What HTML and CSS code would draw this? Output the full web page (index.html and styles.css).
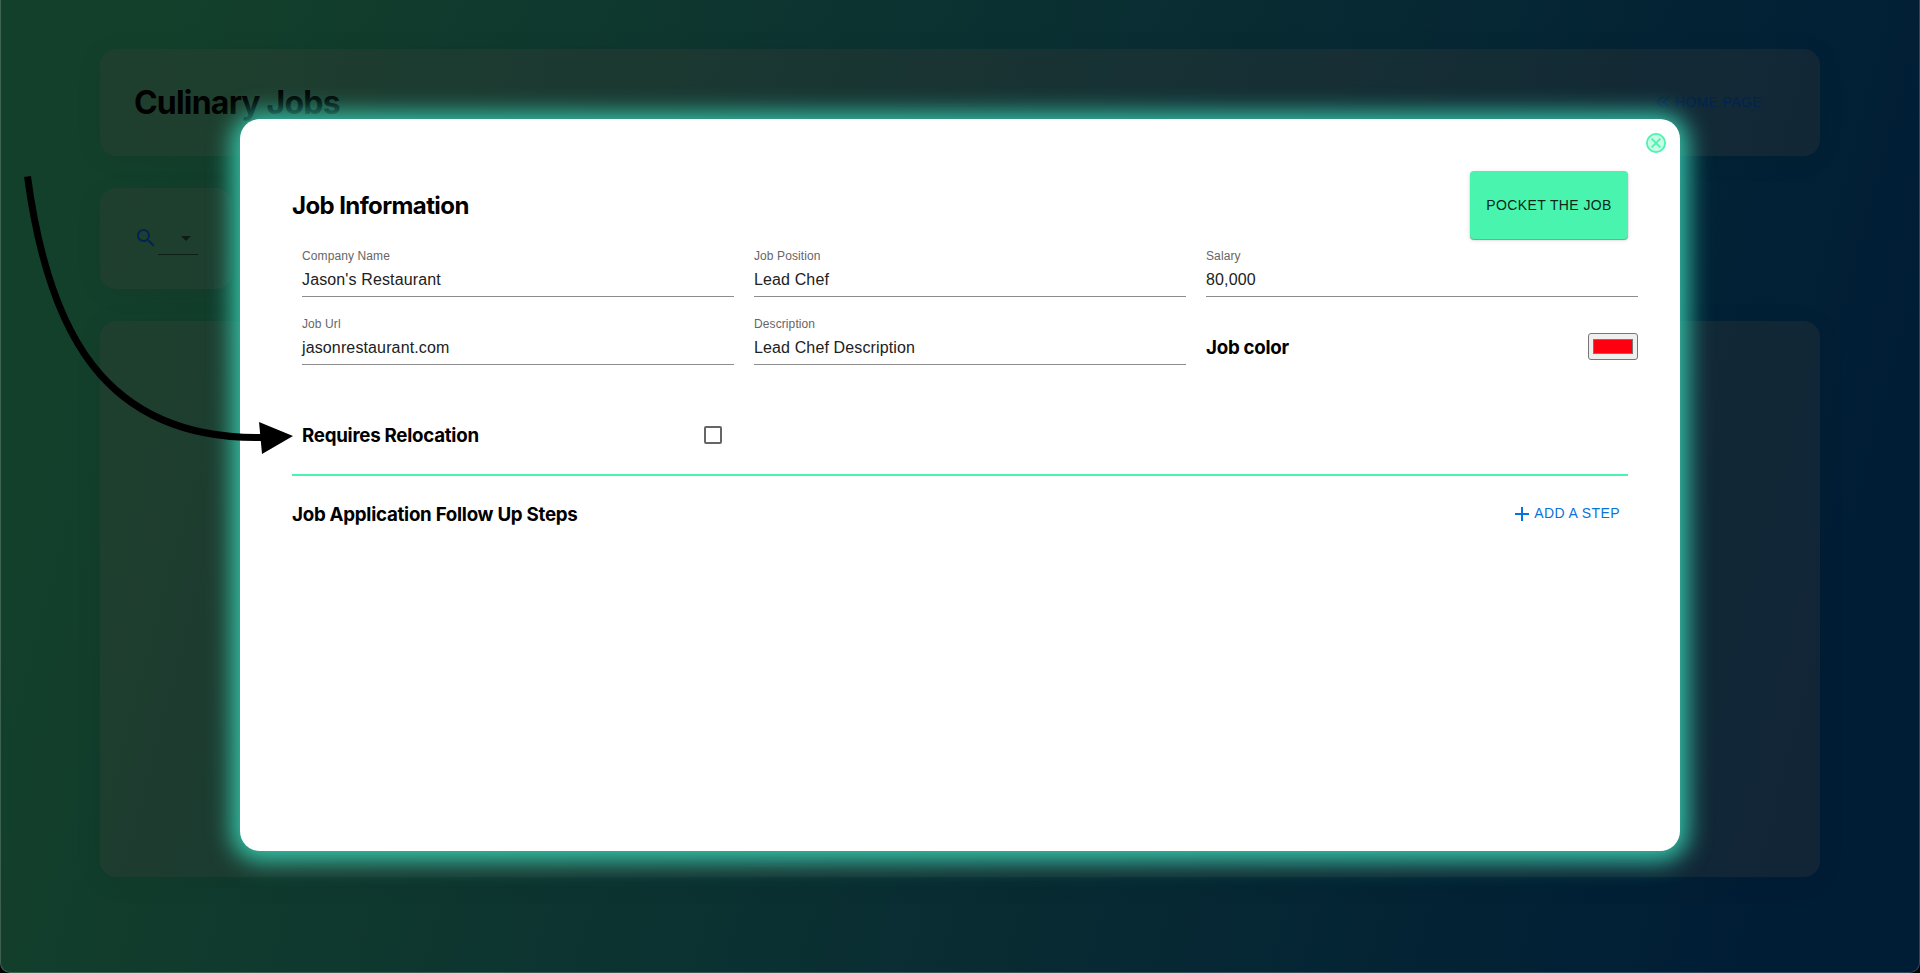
FILE: index.html
```html
<!DOCTYPE html>
<html lang="en">
<head>
<meta charset="utf-8">
<title>Culinary Jobs</title>
<link rel="stylesheet" href="styles.css">
</head>
<body>
<div class="window">
  <main class="page">
    <header class="card header">
      <h1 class="page-title">Culinary Jobs</h1>
      <a class="home-link">
        <svg class="home-icon" viewBox="0 0 14 12"><path d="M6.500 .8 1.200 6l5.300 5.200M12.800 .8 7.500 6l5.300 5.200" fill="none" stroke="currentColor" stroke-width="1.6"/></svg>
        <span class="home-text">HOME PAGE</span>
      </a>
    </header>
    <section class="card search">
      <svg class="search-icon" viewBox="0 0 24 24"><path fill="currentColor" d="M15.500 14h-.79l-.28-.27C15.410 12.590 16 11.110 16 9.500 16 5.910 13.090 3 9.500 3S3 5.910 3 9.500 5.910 16 9.500 16c1.610 0 3.090-.59 4.230-1.570l.27.28v.79l5 4.990L20.490 19l-4.990-5zm-6 0C7.010 14 5 11.990 5 9.500S7.010 5 9.500 5 14 7.010 14 9.500 11.990 14 9.500 14z"/></svg>
      <div class="select"><svg class="caret" viewBox="0 0 10 5"><path d="M0 0h10L5 5z"/></svg></div>
    </section>
    <section class="card board"></section>
  </main>

  <div class="modal">
    <svg class="close" viewBox="0 0 20 20"><circle cx="10" cy="10" r="9.100" fill="#c8fce4" stroke="#48f4ae" stroke-width="1.800"/><path d="M5.600 5.600l8.800 8.800M14.400 5.600l-8.800 8.800" stroke="#48f4ae" stroke-width="1.800"/></svg>
    <div class="modal-head">
      <h2 class="modal-title">Job Information</h2>
      <button class="pocket"><span class="pocket-text">POCKET THE JOB</span></button>
    </div>
    <div class="fields">
      <div class="field"><label class="label">Company Name</label><div class="value">Jason's Restaurant</div></div>
      <div class="field"><label class="label">Job Position</label><div class="value">Lead Chef</div></div>
      <div class="field"><label class="label">Salary</label><div class="value">80,000</div></div>
      <div class="field"><label class="label">Job Url</label><div class="value">jasonrestaurant.com</div></div>
      <div class="field"><label class="label">Description</label><div class="value">Lead Chef Description</div></div>
      <div class="option color"><h3 class="option-title">Job color</h3><div class="swatch"><div class="swatch-fill"></div></div></div>
      <div class="option relocation"><h3 class="option-title">Requires Relocation</h3><span class="checkbox"></span></div>
    </div>
    <div class="steps">
      <h3 class="option-title">Job Application Follow Up Steps</h3>
      <a class="add-step">
        <svg class="plus" viewBox="0 0 14 14"><path d="M7 0v14M0 7h14" stroke="currentColor" stroke-width="2"/></svg>
        <span class="add-text">ADD A STEP</span>
      </a>
    </div>
  </div>

  <svg class="arrow" viewBox="0 0 300 300"><path d="M27.500 26.500C48 180 103 290 262 287.500" fill="none" stroke="#000" stroke-width="7"/><path d="M259 272l34 14-31 18z"/></svg>
</div>
</body>
</html>
```

FILE: styles.css
```css
* { box-sizing: border-box; }
html { height: 100%; background: #000; }
body { margin: 0; height: 100%; overflow: hidden; font-family: "Liberation Sans", Arial, sans-serif; color: #000; }
h1, h2, h3 { margin: 0; font-family: Inter, sans-serif; font-weight: 700; white-space: nowrap; }

.window {
  position: relative;
  height: 973px;
  padding: 49px 99px 0;
  border: 1px solid rgba(255, 255, 255, .18);
  border-top: 0;
  border-radius: 0 0 10px 10px;
  background: linear-gradient(105deg, #13402b 8%, #0c3231 42%, #001d36 92%) border-box;
  overflow: hidden;
}
.page { display: flex; flex-direction: column; gap: 32px; }
.card { background: rgba(64, 60, 58, .26); border-radius: 16px; box-shadow: 0 4px 30px rgba(0, 0, 0, .06); }
.header { height: 107px; display: flex; align-items: center; justify-content: space-between; padding: 0 58px 0 34px; }
.page-title { font-size: 32px; line-height: 40px; letter-spacing: -.8px; }
.home-link { display: flex; align-items: center; gap: 5px; margin-top: -2px; color: #002450; font-size: 14px; letter-spacing: .4px; }
.home-icon { width: 14px; height: 12px; }
.search { width: 132px; height: 101px; display: flex; align-items: center; padding-left: 34px; color: #002552; }
.search-icon { width: 24px; height: 24px; margin-top: -2px; }
.select { display: flex; justify-content: flex-end; align-items: center; width: 40px; height: 32px; padding-right: 7px; border-bottom: 1px solid #0d2018; }
.caret { width: 10px; height: 5px; fill: #0d1c16; }
.board { height: 556px; }

.modal {
  position: absolute;
  left: 239px;
  top: 119px;
  width: 1440px;
  height: 732px;
  padding: 52px;
  border-radius: 20px;
  background: #fff;
  box-shadow: 0 2px 23px 8px #36c6aa;
}
.close { position: absolute; right: 14px; top: 14px; width: 20px; height: 20px; }
.modal-head { display: flex; justify-content: space-between; align-items: center; height: 68px; }
.modal-title { font-size: 24px; letter-spacing: -.6px; }
.pocket { width: 158px; height: 68px; padding: 0; border: 0; border-radius: 4px; background: #48f4ae; font: 14px "Liberation Sans", Arial, sans-serif; letter-spacing: .4px; color: rgba(0, 0, 0, .87); box-shadow: 0 1px 1px rgba(0, 0, 0, .4), 0 1px 5px rgba(0, 0, 0, .12); white-space: nowrap; }
.fields { display: grid; grid-template-columns: repeat(3, 432px); grid-template-rows: 58px 58px 78px; gap: 10px 20px; margin-left: 10px; margin-right: -10px; }
.field { height: 58px; padding-top: 10px; border-bottom: 1px solid #8d8d8d; }
.label { display: block; height: 15px; line-height: 15px; font-size: 12px; letter-spacing: .1px; color: #666; }
.value { margin-top: 5px; height: 22px; line-height: 22px; font-size: 16px; letter-spacing: .13px; color: #212121; }
.option { display: flex; align-items: center; justify-content: space-between; }
.option-title { font-size: 18.720px; line-height: 24px; letter-spacing: -.26px; }
.color { padding-top: 24px; }
.swatch { width: 50px; height: 27px; margin-bottom: 3px; padding: 5px 4px; border: 1px solid #767676; border-radius: 3px; background: #efefef; }
.swatch-fill { height: 15px; background: #ff0010; border: 1px solid #777; }
.relocation { padding: 44px 12px 0 0; }
.checkbox { width: 18px; height: 18px; margin-bottom: 2px; border: 2px solid #666; border-radius: 2px; }
.steps { display: flex; align-items: center; justify-content: space-between; height: 80px; margin-top: 21px; padding-right: 8px; border-top: 2px solid #48f4ae; }
.add-step { display: flex; align-items: center; gap: 5px; margin-top: -2px; color: #0872dd; font-size: 14px; letter-spacing: .4px; }
.add-text { margin-top: -2px; }
.plus { width: 14px; height: 14px; }

.arrow { position: absolute; left: -1px; top: 150px; width: 300px; height: 300px; overflow: visible; }
```
